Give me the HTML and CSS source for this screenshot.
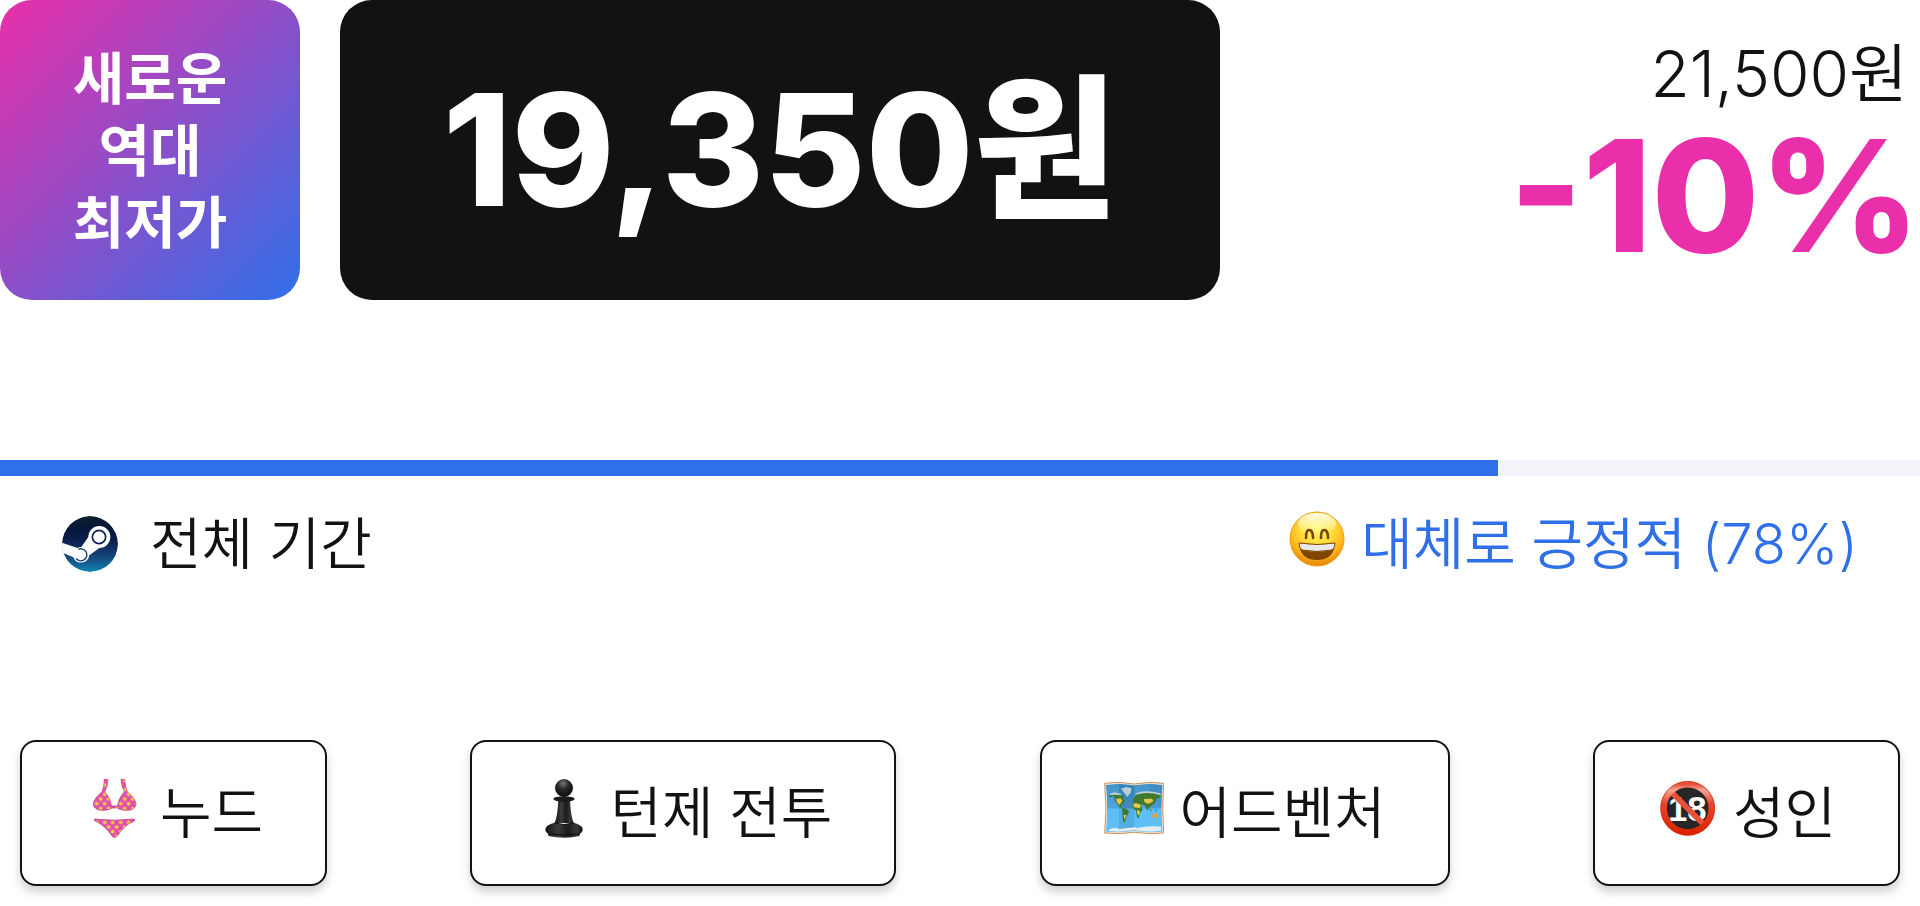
FILE: index.html
```html
<!DOCTYPE html>
<html lang="ko">
<head>
    <meta charset="utf-8">
    <meta name="viewport" content="width=device-width, initial-scale=1">
    <title>19,350원</title>
    <link rel="stylesheet" href="styles.css">
</head>
<body>

    <section class="price">
        <p class="badge">새로운<br>역대<br>최저가</p>
        <p class="current">19,350원</p>
        <div class="discount">
            <p class="original">21,500원</p>
            <p class="percent">-10%</p>
        </div>
    </section>

    <section class="review">
        <div class="bar"><div class="bar-fill" style="width: 78%"></div></div>
        <div class="review-row">
            <div class="period">
                <svg class="steam" viewBox="66 198 168 168" aria-hidden="true">
                    <defs>
                        <linearGradient id="steam-bg" x1="0" y1="0" x2="0" y2="1">
                            <stop offset="0" stop-color="#111d2e"/>
                            <stop offset=".21" stop-color="#051839"/>
                            <stop offset=".4" stop-color="#0a1b48"/>
                            <stop offset=".58" stop-color="#132e62"/>
                            <stop offset=".74" stop-color="#144b7e"/>
                            <stop offset=".87" stop-color="#136497"/>
                            <stop offset="1" stop-color="#1387b8"/>
                        </linearGradient>
                        <clipPath id="steam-clip"><circle cx="150" cy="282" r="84"/></clipPath>
                    </defs>
                    <g clip-path="url(#steam-clip)">
                        <circle cx="150" cy="282" r="84" fill="url(#steam-bg)"/>
                        <path fill="#fff" d="M60 276 L112 294 Q118 291 124 291 L145 261 A33 33 0 1 1 178 294 L148 316 A25 25 0 0 1 100 322 L60 305z"/>
                        <circle cx="177" cy="261" r="20" fill="#fff" stroke="#0c1f4e" stroke-width="5"/>
                        <path fill="none" stroke="#134172" stroke-width="4" d="M115 298 A18 18 0 1 1 108 325"/>
                    </g>
                </svg>
                <span>전체 기간</span>
            </div>
            <div class="rating">
                <svg class="emoji" viewBox="0 0 60 60" aria-hidden="true">
                    <defs>
                        <radialGradient id="face" cx=".5" cy=".3" r=".72">
                            <stop offset="0" stop-color="#fff96e"/>
                            <stop offset=".4" stop-color="#ffdf3c"/>
                            <stop offset=".75" stop-color="#fdb21b"/>
                            <stop offset="1" stop-color="#e07c04"/>
                        </radialGradient>
                        <linearGradient id="shine" x1="0" y1="0" x2="0" y2="1">
                            <stop offset="0" stop-color="#fff" stop-opacity=".85"/>
                            <stop offset="1" stop-color="#fff" stop-opacity="0"/>
                        </linearGradient>
                    </defs>
                    <circle cx="30" cy="30" r="27" fill="url(#face)" stroke="#f09c12"/>
                    <ellipse cx="30" cy="15" rx="19" ry="11" fill="url(#shine)"/>
                    <path d="M19 29 Q19 21 22 21 Q26 21 26 29 M34 29 Q34 21 37 21 Q41 21 41 29" fill="none" stroke="#7a4300" stroke-width="2.6" stroke-linecap="round"/>
                    <path d="M12 34 Q30 37 48 34 Q47 51 30 51 Q13 51 12 34z" fill="#804600"/>
                    <path d="M12 34 Q30 37 48 34 Q48 39 45 41 Q30 44 15 41 Q12 39 12 34z" fill="#e9e9ec" stroke="#804600"/>
                </svg>
                <span>대체로 긍정적 (78%)</span>
            </div>
        </div>
    </section>

    <nav class="tags">
        <a class="tag" href="#">
            <svg class="emoji" viewBox="252 144 180 180" aria-hidden="true">
                <defs>
                    <pattern id="dots" width="24" height="28" patternUnits="userSpaceOnUse" patternTransform="translate(8 4)">
                        <rect width="24" height="28" fill="#e34cb4"/>
                        <circle cx="6" cy="7" r="5.5" fill="#f3d13a"/>
                        <circle cx="18" cy="21" r="5.5" fill="#f3d13a"/>
                    </pattern>
                </defs>
                <g fill="url(#dots)" stroke="#b5307f" stroke-width="2" stroke-linejoin="round">
                    <path d="M313 148h11q-1 22-10 38 14 12 21 42h17q7-30 21-42-9-16-10-38h11q2 25 8 38 26 20 26 38-4 16-25 17-22 0-31-7h-16q-9 7-31 7-21-1-25-17 0-18 26-38 6-13 7-38z"/>
                    <path d="M283 267q60 7 120 0l1 5q-34 15-52 46l-8 6-8-6q-19-31-52-46z"/>
                </g>
            </svg>
            <span>누드</span>
        </a>
        <a class="tag" href="#">
            <svg class="emoji" viewBox="225 144 180 180" aria-hidden="true">
                <defs>
                    <linearGradient id="pawn" x1="0" y1="0" x2="1" y2="0">
                        <stop offset="0" stop-color="#151515"/>
                        <stop offset=".35" stop-color="#3c3c3c"/>
                        <stop offset=".6" stop-color="#1a1a1a"/>
                        <stop offset=".85" stop-color="#3a3a3a"/>
                        <stop offset="1" stop-color="#0d0d0d"/>
                    </linearGradient>
                    <radialGradient id="pawn-head" cx=".45" cy=".25" r=".6">
                        <stop offset="0" stop-color="#777"/>
                        <stop offset=".5" stop-color="#2b2b2b"/>
                        <stop offset="1" stop-color="#151515"/>
                    </radialGradient>
                </defs>
                <path fill="url(#pawn)" d="M298 208h35q2 50 11 71h-57q9-21 11-71z"/>
                <ellipse cx="315" cy="207" rx="32" ry="8" fill="#1c1c1c"/>
                <circle cx="315" cy="174" r="27" fill="url(#pawn-head)"/>
                <path fill="url(#pawn)" d="M287 278q28 10 57 0 28 8 27 20 0 10-9 13v7q-47 10-94 0v-7q-9-3-9-13 0-13 28-20z"/>
                <path fill="none" stroke="#0a0a0a" stroke-width="3" d="M287 279q28 9 57 0M267 311q47 9 96 0"/>
            </svg>
            <span>턴제 전투</span>
        </a>
        <a class="tag" href="#">
            <svg class="emoji" viewBox="219 144 180 180" aria-hidden="true">
                <defs>
                    <linearGradient id="sea" x1="0" y1="0" x2="0" y2="1">
                        <stop offset="0" stop-color="#4393c9"/>
                        <stop offset=".5" stop-color="#4fa5dc"/>
                        <stop offset=".52" stop-color="#5cbff8"/>
                        <stop offset="1" stop-color="#62c0f5"/>
                    </linearGradient>
                </defs>
                <path fill="#f6e5d0" stroke="#c98f5f" stroke-width="3" d="M221 160l43-3 46 5 47-5 41 3q-6 75 0 149l-41 2-47-4-46 4-43-2q8-75 0-149z"/>
                <path fill="url(#sea)" d="M225 165l39-4 46 5 47-5 37 4q-5 70 0 140l-37 2-47-4-46 4-39-2q7-69 0-140z"/>
                <path fill="#2b6a9c" opacity=".45" d="M264 163l46 5v67h-46z"/>
                <path fill="#2b6a9c" opacity=".2" d="M264 235h46v67l-46 4zM357 163l35 3-2 69h-33z"/>
                <path fill="#b9cfda" d="M270 176l16-5 16 4-3 13-10 12-9-11zM236 192l14-5 22 5-6 5h-28zM314 190q30-12 74 0l2 6h-70z"/>
                <path fill="#e4edf2" d="M233 299q16-9 32-2l45-5q10 5 20 0 30-5 60-2v12l-33 3-47-4-46 4-31-2z"/>
                <path fill="#3f7a2e" d="M234 196q18-4 46 2l-6 8 8 6-12 14 4 8-8-4-12-13-6-18-14 2zM273 234q15-1 21 12l-8 14-5 19-5-5-1-22zM306 208l10-14q32-11 74 2l-5 8-9 2-5 14-14 10-8 11-8-15-20-5-15 1zM304 222q12-6 25 2l6 17-8 8-4 16-5-3-3-20-10-7z"/>
                <path fill="#e9c64c" d="M255 207l14-2 5 8-9 12-7-8zM306 221q14-4 23 4l-2 10-18-3zM318 241l9 1-3 15-5-5zM339 207l25-1 3 8-15 8-12-6zM278 255l8-1-5 16z"/>
                <path fill="#e9a035" d="M364 254l10-5 7 5-4 12-7-4-6 2z"/>
                <path fill="#3f8440" d="M354 235l8 5-2 5zM371 237l9 5-6 2z"/>
            </svg>
            <span>어드벤처</span>
        </a>
        <a class="tag" href="#">
            <svg class="emoji" viewBox="231 144 180 180" aria-hidden="true">
                <defs>
                    <linearGradient id="ban" x1="0" y1="0" x2="0" y2="1">
                        <stop offset="0" stop-color="#e8503a"/>
                        <stop offset=".12" stop-color="#f5a594"/>
                        <stop offset=".4" stop-color="#e8452e"/>
                        <stop offset="1" stop-color="#da2500"/>
                    </linearGradient>
                </defs>
                <circle cx="323" cy="235" r="70" fill="#262626"/>
                <text class="eighteen" x="322" y="273" text-anchor="middle">18</text>
                <path stroke="#e95038" stroke-width="17" d="M277 189l92 92"/>
                <circle cx="323" cy="235" r="72" fill="none" stroke="url(#ban)" stroke-width="19"/>
                <circle cx="323" cy="235" r="81" fill="none" stroke="#c92200" stroke-width="2"/>
            </svg>
            <span>성인</span>
        </a>
    </nav>

</body>
</html>
```
FILE: styles.css
```css
* {
    box-sizing: border-box;
}
body {
    margin: 0;
    background-color: #fff;
    color: #121212;
    font-family: Inter, "Noto Sans CJK KR", sans-serif;
    font-size: 56px;
    line-height: 72px;
}
p {
    margin: 0;
}
.original,
.period,
.rating,
.tag {
    font-family: Inter, "Noto Sans CJK KR DemiLight", "Noto Sans CJK KR", sans-serif;
    font-weight: 320;
}

/* price */
.price {
    display: flex;
    gap: 40px;
    height: 300px;
}
.badge {
    display: flex;
    align-items: center;
    justify-content: center;
    flex: 0 0 300px;
    padding-top: 2px;
    border-radius: 32px;
    background: linear-gradient(135deg, #e92fa9, #2f6fe8);
    color: #fff;
    font-weight: 700;
    text-align: center;
}
.current {
    flex: 0 1 880px;
    border-radius: 32px;
    background-color: #121212;
    color: #fff;
    font-size: 156px;
    font-weight: 800;
    line-height: 300px;
    text-align: center;
}
.discount {
    flex: 1;
    padding-top: 38px;
    text-align: right;
}
.original {
    padding-right: 12px;
    font-size: 64px;
}
.percent {
    color: #e92fa9;
    font-size: 156px;
    font-weight: 800;
    line-height: 172px;
}

/* review */
.review {
    margin-top: 160px;
}
.bar {
    height: 16px;
    background-color: #f3f4f9;
}
.bar-fill {
    height: 100%;
    background-color: #2f6fe8;
}
.review-row {
    display: flex;
    justify-content: space-between;
    padding: 32px 62px 0;
}
.period,
.rating {
    display: flex;
    align-items: center;
}
.period {
    gap: 32px;
}
.rating {
    gap: 14px;
    color: #2f6fe8;
}
.steam {
    width: 56px;
    height: 56px;
}
.emoji {
    flex: none;
    width: 60px;
    height: 60px;
    margin-bottom: 10px;
}

/* tags */
.tags {
    display: flex;
    justify-content: space-between;
    margin-top: 160px;
    padding: 0 20px 20px;
}
.tag {
    display: flex;
    align-items: center;
    gap: 16px;
    height: 146px;
    padding: 0 62px;
    border: 2px solid #121212;
    border-radius: 16px;
    background-color: #fff;
    box-shadow: 0 6px 10px rgba(0, 0, 0, .18);
    color: #121212;
    text-decoration: none;
    white-space: nowrap;
}
.eighteen {
    fill: #fff;
    font-family: "Liberation Sans", sans-serif;
    font-size: 104px;
    font-weight: 700;
}
```
